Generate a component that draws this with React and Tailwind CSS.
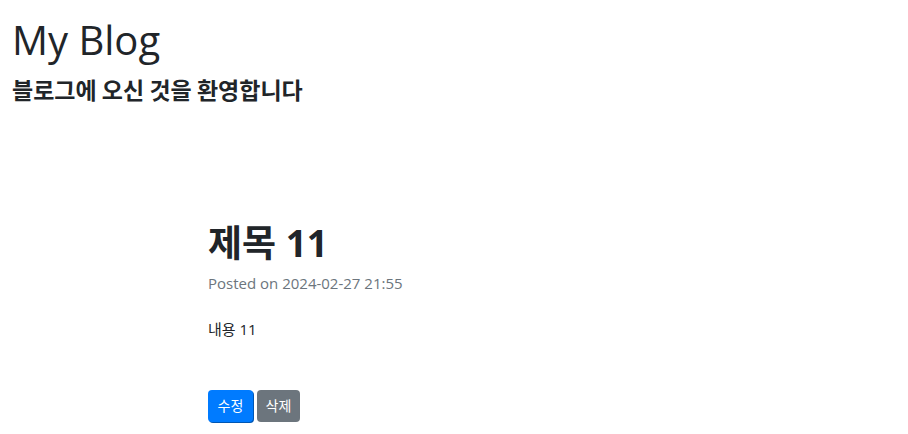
import React from 'react';

const font = {
  fontFamily: '"Segoe UI", "Open Sans", "Noto Sans CJK KR", sans-serif',
};

const krFont = {
  fontFamily: '"Noto Sans CJK KR", sans-serif',
};

const App = () => {
  return (
    <div className="min-h-[434px] bg-white text-[#212529]" style={font}>
      <header className="px-3 pt-4">
        <h1 className="text-[40px] leading-[1.2] font-normal">My Blog</h1>
        <h5 className="mt-3 text-[23px] leading-[1.2] font-bold" style={krFont}>
          블로그에 오신 것을 환영합니다
        </h5>
      </header>

      <main className="pl-[208px] pt-[114px]">
        <h2 className="text-[37px] leading-[1.35] font-bold">제목 11</h2>
        <p className="mt-1 text-[15px] text-[#6c757d]">Posted on 2024-02-27 21:55</p>
        <p className="mt-[24px] text-[15px]">내용 11</p>
        <div className="mt-[49px] flex gap-1">
          <button className="h-[32px] w-[45px] rounded text-[14px] text-white bg-[#007bff] shadow-[1px_1px_0_0_#0056b3]">
            수정
          </button>
          <button className="h-[32px] w-[43px] rounded text-[14px] text-white bg-[#6c757d]">
            삭제
          </button>
        </div>
      </main>
    </div>
  );
};

export default App;
